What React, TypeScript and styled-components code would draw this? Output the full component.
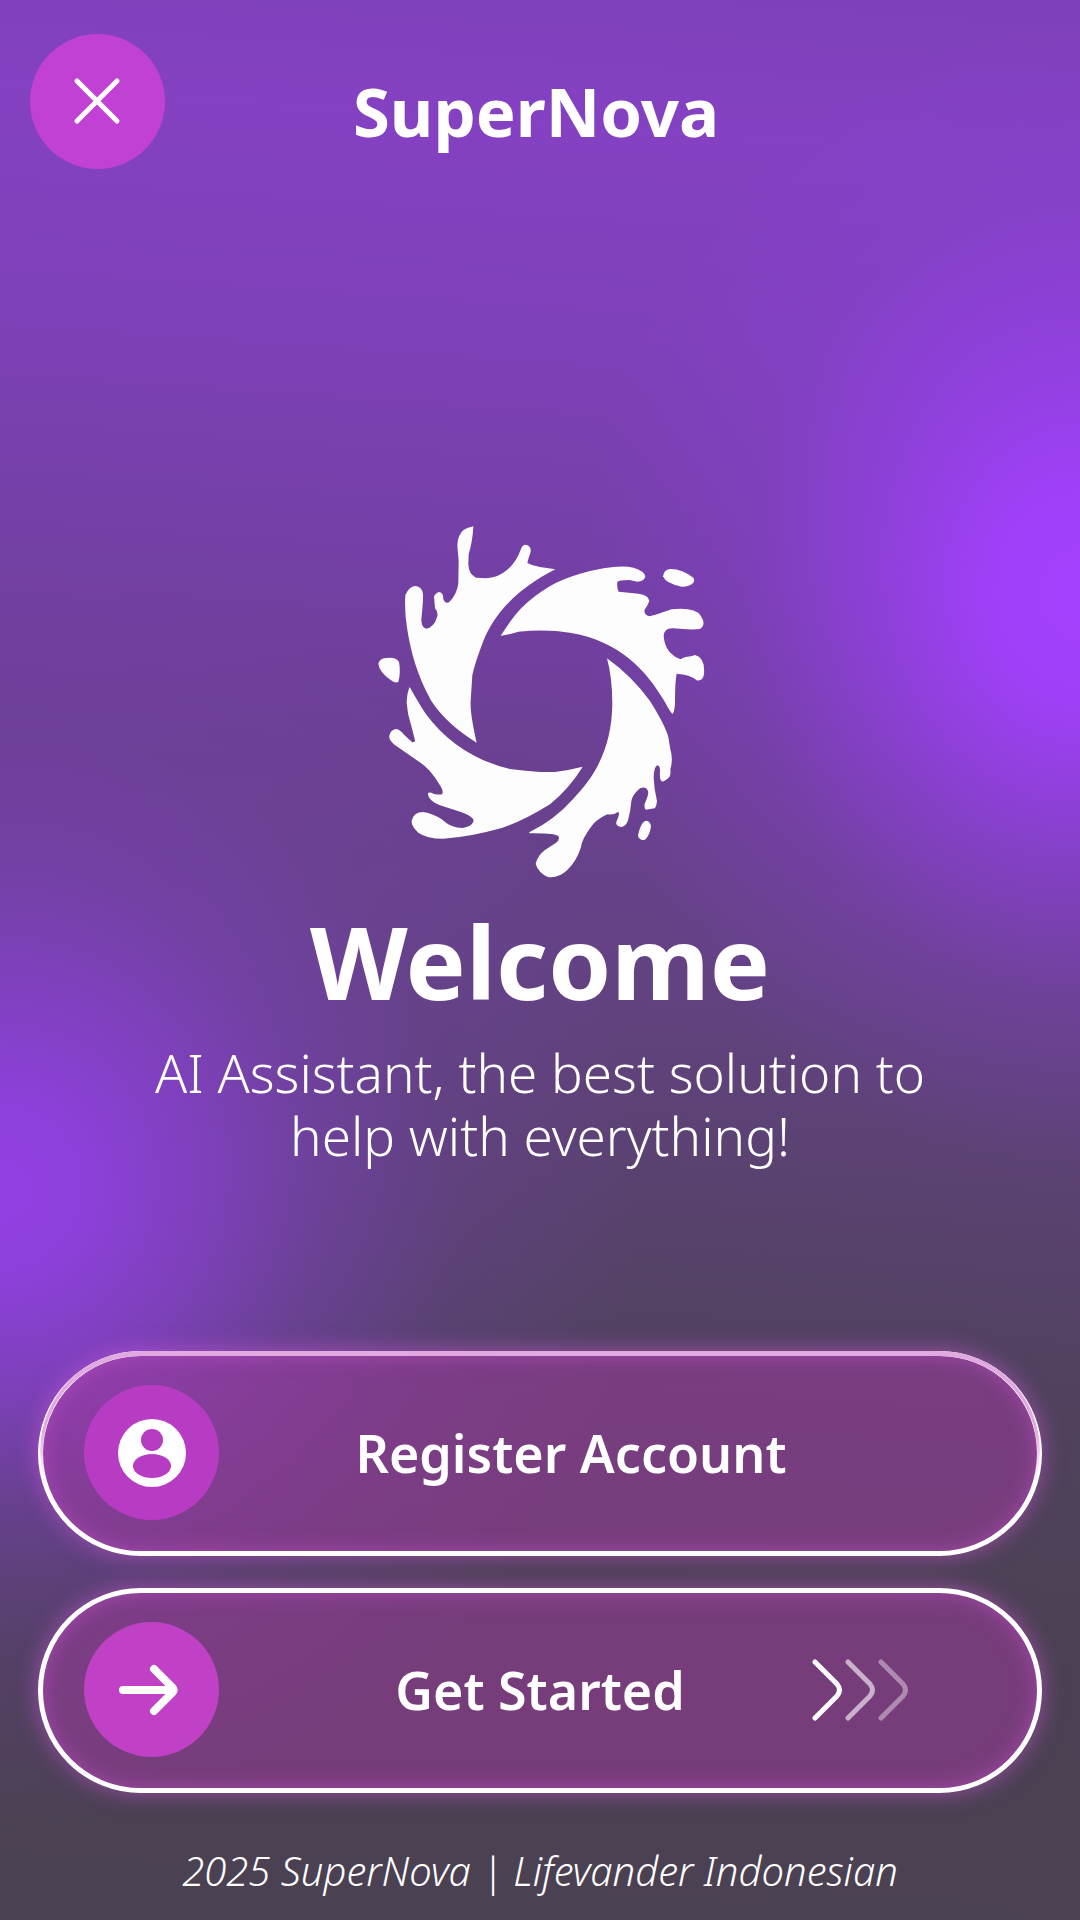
import React from "react";
import styled, { createGlobalStyle } from "styled-components";

const GlobalStyle = createGlobalStyle`
  *, *::before, *::after { box-sizing: border-box; }
  body {
    margin: 0;
    color: #fff;
    font-family: "Noto Sans", "Open Sans", sans-serif;
  }
`;

const Page = styled.div`
  min-height: 100vh;
  display: flex;
  flex-direction: column;
  background:
    radial-gradient(
      ellipse 500px 580px at 100% 31%,
      rgba(164, 64, 255, 1) 0%,
      rgba(163, 64, 255, 0.92) 18%,
      rgba(156, 64, 245, 0.6) 42%,
      rgba(145, 64, 225, 0.25) 68%,
      rgba(135, 64, 200, 0) 100%
    ),
    radial-gradient(
      ellipse 640px 640px at 0% 62%,
      rgba(146, 64, 228, 1) 0%,
      rgba(144, 64, 224, 0.94) 14%,
      rgba(138, 64, 212, 0.76) 32%,
      rgba(130, 64, 200, 0.48) 50%,
      rgba(122, 64, 184, 0.2) 72%,
      rgba(116, 64, 165, 0) 100%
    ),
    linear-gradient(
      184deg,
      #7e41ba 0%,
      #8441c2 8%,
      #7f41ba 18%,
      #7440a6 30%,
      #6b4092 40%,
      #644284 49%,
      #5b4272 59%,
      #50425e 70%,
      #4c4154 82%,
      #4a4152 100%
    );
`;

const Header = styled.header`
  display: grid;
  grid-template-columns: 135px 1fr 143px;
  align-items: center;
  padding: 34px 30px 0;
`;

const Disc = styled.span<{ $color: string }>`
  display: grid;
  place-items: center;
  width: 135px;
  height: 135px;
  border-radius: 50%;
  background: ${(p) => p.$color};
`;

const CloseButton = styled.button`
  padding: 0;
  border: 0;
  border-radius: 50%;
  background: none;
  color: inherit;
  cursor: pointer;
`;

const Brand = styled.div`
  padding-top: 18px;
  font-size: 67px;
  line-height: 80px;
  font-weight: 700;
  text-align: center;
`;

const Hero = styled.main`
  flex: 1;
  display: flex;
  flex-direction: column;
  align-items: center;
  justify-content: center;
  padding: 158px 80px 0;
  text-align: center;
`;

const Logo = styled.svg`
  width: 360px;
  height: 380px;
`;

const Welcome = styled.h1`
  margin: 0;
  font-size: 101px;
  line-height: 140px;
  font-weight: 700;
`;

const Tagline = styled.p`
  max-width: 840px;
  margin: 10px 0 0;
  font-size: 53px;
  line-height: 63px;
  font-weight: 300;
`;

const Actions = styled.div`
  display: flex;
  flex-direction: column;
  gap: 32px;
  padding: 0 38px;
`;

const ActionButton = styled.button<{ $tinted?: boolean }>`
  position: relative;
  display: grid;
  grid-template-columns: 184px 1fr 184px;
  align-items: center;
  height: 205px;
  padding: 0 41px 2px;
  border: 5px solid #fff;
  border-radius: 103px;
  background: rgba(160, 58, 160, 0.52);
  box-shadow:
    0 0 22px rgba(205, 85, 215, 0.6),
    inset 0 0 20px rgba(190, 80, 195, 0.6);
  color: inherit;
  font-family: inherit;
  font-size: 52px;
  line-height: 64px;
  font-weight: 600;
  cursor: pointer;

  &::after {
    content: "";
    display: ${(p) => (p.$tinted ? "block" : "none")};
    position: absolute;
    inset: -5px -3px 0;
    border: 5px solid #e0aae0;
    border-width: 5px 3px 0;
    border-radius: 103px;
    mask-image: linear-gradient(#000 40%, transparent 65%);
    pointer-events: none;
  }
`;

const Label = styled.span<{ $shift?: boolean }>`
  padding-left: ${(p) => (p.$shift ? "62px" : "0")};
  text-align: center;
`;

const Footer = styled.footer`
  padding: 48px 24px 19px;
  font-size: 40px;
  line-height: 60px;
  font-style: italic;
  font-weight: 300;
  text-align: center;
`;

export default function App() {
  return (
    <>
      <GlobalStyle />
      <Page>
        <Header>
          <CloseButton type="button" aria-label="Close">
            <Disc $color="#c141d4">
              <svg width="50" height="50" viewBox="0 0 50 50" fill="none" stroke="#fff" strokeWidth="5" strokeLinecap="round">
                <path d="M4 4 44 44M44 4 4 44" />
              </svg>
            </Disc>
          </CloseButton>
          <Brand>SuperNova</Brand>
        </Header>

        <Hero>
          <Logo viewBox="0 0 1080 1140" fill="#fdfdfd" aria-hidden="true">
            <path d="M586 175 L540 168 Q515 163 502 156 Q504 146 511 126 Q516 107 500 102 Q488 99 482 116 Q470 152 440 178 Q415 200 378 202 L348 200 Q326 190 325 160 L326 130 Q338 90 340 46 Q310 52 303 66 Q292 82 292 105 L296 150 L295 215 Q292 248 268 273 Q255 280 250 264 Q250 243 236 243 Q228 246 222 256 L225 292 Q236 304 231 318 Q222 350 198 353 Q184 350 184 325 Q190 270 189 250 Q187 227 166 225 Q147 227 136 252 Q133 300 141 350 C152 420 170 490 214 570 Q260 640 350 695 C340 650 330 600 332 570 L337 492 Q345 455 370 390 C400 315 460 240 586 175Z" />
            <path d="M422 374 Q460 315 485 290 C540 238 590 208 660 188 Q770 158 820 170 Q853 180 856 196 Q852 212 832 212 L808 207 Q775 207 772 213 Q770 232 776 242 L836 248 Q866 252 868 270 Q864 282 854 296 Q850 310 868 316 Q880 314 935 295 Q1005 288 1022 314 Q1040 340 1020 354 Q990 357 940 352 Q912 350 911 376 Q915 428 962 445 C978 434 986 440 1005 432 Q1036 440 1032 490 Q1028 512 1010 508 Q990 490 950 488 Q945 510 945 575 Q944 600 938 609 Q932 606 913 570 C860 480 780 390 630 365 Q560 354 475 362 Q450 370 422 374Z" />
            <path d="M741 442 Q815 495 870 570 Q914 640 925 678 L931 715 Q940 745 931 775 Q933 792 928 798 Q912 814 905 811 Q898 805 900 780 Q900 764 892 763 Q882 767 881 800 Q882 835 891 870 Q889 888 884 892 L857 896 Q852 892 854 878 Q867 850 864 840 Q858 825 840 832 Q817 852 814 870 Q812 900 804 928 Q798 948 782 948 Q763 943 771 928 Q781 903 774 903 Q760 913 742 910 Q710 925 695 945 Q665 985 663 1008 Q650 1050 622 1077 Q595 1103 563 1098 Q535 1085 527 1059 Q532 1034 555 1017 L587 996 Q600 988 596 977 Q590 966 508 967 L508 964 Q585 925 640 863 C715 785 755 700 757 580 Q757 500 741 442Z" />
            <path d="M149 528 Q175 575 195 605 C260 695 350 750 450 774 Q530 785 585 783 Q625 778 668 767 Q630 830 570 880 Q490 930 425 951 Q330 978 250 983 Q200 983 175 965 Q153 945 155 930 Q160 903 190 903 Q220 908 245 925 C265 943 285 951 307 951 Q335 947 341 930 Q338 915 305 904 L240 883 Q202 867 204 846 Q210 842 220 848 Q238 852 246 850 Q252 840 238 820 Q210 772 175 751 L110 706 Q85 688 88 674 Q92 656 108 654 Q120 656 133 672 L155 692 Q163 697 165 688 L154 645 Q142 610 140 575 Q141 545 149 528Z" />
            <path d="M55 458 Q59 441 80 441 Q108 438 117 453 Q123 485 115 513 Q106 518 91 506 Q58 483 55 458Z" />
            <path d="M909 196 Q911 177 930 174 Q965 173 1000 200 Q1007 210 995 220 Q983 229 965 227 Q917 218 909 196Z" />
            <path d="M834 975 Q840 938 856 929 Q870 929 873 945 Q870 973 855 986 Q840 990 834 975Z" />
          </Logo>
          <Welcome>Welcome</Welcome>
          <Tagline>AI Assistant, the best solution to help with everything!</Tagline>
        </Hero>

        <Actions>
          <ActionButton type="button" $tinted>
            <Disc $color="#b83cc3">
              <svg width="68" height="68" viewBox="0 0 68 68" fill="#b83cc3">
                <circle cx="34" cy="34" r="34" fill="#fff" />
                <circle cx="34" cy="21" r="11" />
                <ellipse cx="34" cy="47" rx="19" ry="12" />
              </svg>
            </Disc>
            <Label $shift>Register Account</Label>
          </ActionButton>
          <ActionButton type="button">
            <Disc $color="#c041c6">
              <svg width="68" height="68" viewBox="0 0 68 68" fill="none" stroke="#fff" strokeWidth="8" strokeLinecap="round" strokeLinejoin="round">
                <path d="M5 34H54" />
                <path d="M36 13 54 31Q57 34 54 37L36 55" />
              </svg>
            </Disc>
            <Label>Get Started</Label>
            <svg width="98" height="62" viewBox="0 0 98 62" fill="none" stroke="#fff" strokeWidth="5" strokeLinecap="round" strokeLinejoin="round">
              <path d="M3 3 25 25Q30 31 25 37L3 59" />
              <path d="M36 3 58 25Q63 31 58 37L36 59" opacity="0.6" />
              <path d="M69 3 91 25Q96 31 91 37L69 59" opacity="0.4" />
            </svg>
          </ActionButton>
        </Actions>

        <Footer>2025 SuperNova | Lifevander Indonesian</Footer>
      </Page>
    </>
  );
}
